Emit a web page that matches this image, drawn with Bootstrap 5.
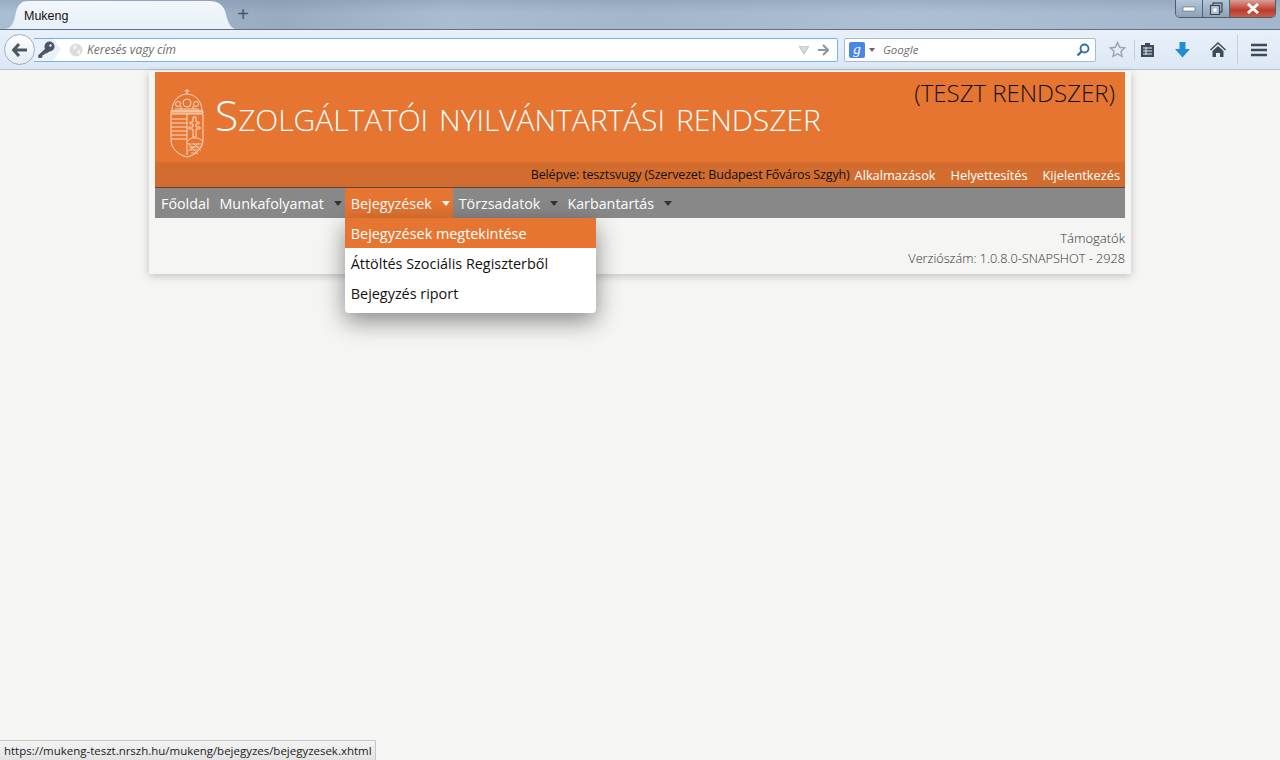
<!DOCTYPE html>
<html lang="hu">
<head>
  <meta charset="UTF-8">
  <title>Mukeng</title>
  <link href="https://cdn.jsdelivr.net/npm/bootstrap@5.3.3/dist/css/bootstrap.min.css" rel="stylesheet">
  <style>
    html, body { height: 760px; overflow: hidden; }
    body { background: #f5f5f3; font-family: "Open Sans", "Liberation Sans", sans-serif; font-size: 14px; color: #333; }

    /* browser chrome */
    .ff-tabbar { height: 30px; background: linear-gradient(rgba(70, 90, 115, .16), rgba(70, 90, 115, 0) 45%), linear-gradient(90deg, #a9bdd3 0%, #98abc1 22%, #a9bcd2 35%, #a3b6cc 50%, #acbfd4 70%, #a3b6cc 100%); border-bottom: 1px solid #5f7184; }
    .ff-tab { width: 232px; height: 29px; margin-left: 4px; flex: none; background: linear-gradient(#f3f7fb, #e6eff9); clip-path: path("M0 29C8 29 10 22 12 12C14 4 18 1 24 1L206 1C214 1 220 5 222 14C224 24 228 29 232 29Z"); padding: 7px 0 0 20px; font-family: "Liberation Sans", sans-serif; font-size: 12.5px; color: #111; }
    .ff-newtab { width: 30px; margin-left: -8px; text-align: center; font-size: 20px; line-height: 29px; color: #4a5561; font-family: "Liberation Sans", sans-serif; }
    .ff-winbtns { height: 18px; margin: 0 4px 0 auto; border: 1px solid #4d5c6b; border-top: 0; border-radius: 0 0 5px 5px; overflow: hidden; }
    .ff-winbtn { width: 27px; display: flex; align-items: center; justify-content: center; background: linear-gradient(#b4c5d8, #8ea3b9); border-right: 1px solid #53626f; }
    .ff-winclose { width: 45px; background: linear-gradient(#d9a097, #c0392b 60%, #c4604f); border-right: 0; }
    .ff-toolbar { height: 40px; background: linear-gradient(#e8f0f9, #dde8f6); border-bottom: 1px solid #b6c4d3; padding-left: 4px; }
    .ff-back { width: 31px; height: 31px; border-radius: 50%; border: 1px solid #9fb0c1; background: linear-gradient(#fff, #e3ebf4); z-index: 2; flex: none; }
    .ff-urlbar { width: 804px; height: 24px; margin-left: -1px; background: #fff; border: 1px solid #6fb4ea; border-left: 0; border-radius: 0 2px 2px 0; font-style: italic; font-size: 12px; color: #6d6d6d; padding-right: 4px; }
    .ff-ident { width: 27px; height: 22px; background: #e8f0f9; clip-path: polygon(0 0, 19px 0, 27px 50%, 19px 100%, 0 100%); flex: none; padding-left: 3px; margin-right: 8px; }
    .ff-globe { width: 14px; height: 14px; margin-right: 4px; flex: none; }
    .ff-search { width: 252px; height: 24px; margin-left: 6px; background: #fff; border: 1px solid #a9bacb; border-radius: 2px; font-style: italic; font-size: 11.5px; color: #6d6d6d; padding: 0 5px 0 4px; }
    .ff-glogo { width: 16px; height: 16px; background: #4a86e8; color: #fff; font-family: "Liberation Serif", serif; font-style: italic; font-weight: 400; font-size: 15px; line-height: 14px; text-align: center; border-radius: 2px; }
    .ff-star { margin-left: 13px; }
    .ff-sep { width: 1px; height: 20px; background: #c3cfdb; }
    .ff-sep-tall { height: 30px; margin-left: 11px; margin-right: 13px; }
    .ff-clip { margin-left: 5px; }
    .ff-down { margin-left: 20px; }
    .ff-home { margin-left: 20px; }

    /* page */
    .app-shell { width: 982px; height: 203px; margin: 1px auto 0 149px; padding: 1px 6px 0; background: #f5f5f3; box-shadow: 0 2px 8px rgba(0, 0, 0, .22); }
    .app-head { height: 90px; background: #e67532; padding: 0 10px 0 14px; }
    .app-title { font-weight: 300; font-variant: small-caps; font-size: 42.55px; letter-spacing: -.06px; line-height: 1; color: #fff; margin: 0 0 0 10px; padding-top: 22px; white-space: nowrap; }
    .app-test { font-weight: 300; font-size: 24px; line-height: 1; color: #111; margin-top: 9px; white-space: nowrap; }
    .app-userbar { height: 26px; background: #d26d2f; border-bottom: 1px solid #5c4538; font-size: 12.8px; padding: 0 5px 0 0; line-height: 26px; }
    .app-userbar span { color: #111; font-size: 12.5px; letter-spacing: -.15px; margin-right: 5px; }
    .app-userbar a { color: #fff; text-decoration: none; margin-left: 15px; }
    .app-userbar span + a { margin-left: 0; }
    .app-menu { height: 30px; background: #888; font-size: 14.3px; }
    .app-menu a { display: block; color: #fff; text-decoration: none; line-height: 30px; padding: 1px 6px 0; height: 30px; white-space: nowrap; }
    .app-menu > li:first-child > a { padding-right: 4px; }
    .app-menu a.has-sub { display: flex; padding-right: 3px; }
    .app-menu a.has-sub::after { content: ""; width: 0; height: 0; margin: 12px 0 0 10px; border: 4px solid transparent; border-top: 5px solid #333; border-bottom: 0; }
    .app-menu li.is-open > a { background: #e67532; }
    .app-menu li.is-open > a::after { border-top-color: #fff; }
    .app-drop { position: absolute; left: 0; top: 30px; width: 251px; background: #fff; border-radius: 0 0 4px 4px; padding-bottom: 5px; box-shadow: 0 8px 24px rgba(0, 0, 0, .45); overflow: hidden; z-index: 5; font-size: 14.4px; }
    .app-menu .app-drop a { color: #111; }
    .app-menu .app-drop a.is-active { background: #e67532; color: #fff; }
    .app-foot { font-size: 13px; text-align: right; color: #333; padding-top: 10px; line-height: 20px; font-weight: 300; }
    .app-version { font-size: 12.7px; }

    .ff-status { position: absolute; left: 0; bottom: 0; height: 20px; width: 376px; background: linear-gradient(#f4f4f4, #e3e3e3); border: 1px solid #c8c8c8; border-width: 1px 1px 0 0; font-family: "Open Sans", sans-serif; font-size: 11.48px; line-height: 20px; padding-left: 4px; color: #222; white-space: nowrap; }
  </style>
</head>
<body>
<!-- Böngésző keret -->
<div class="ff-tabbar d-flex">
  <div class="ff-tab">Mukeng</div>
  <div class="ff-newtab">+</div>
  <div class="ff-winbtns d-flex">
    <div class="ff-winbtn"><svg width="14" height="6"><rect x="1" y="1" width="12" height="4" fill="#fff" stroke="#55646f" stroke-width=".6"/></svg></div>
    <div class="ff-winbtn"><svg width="14" height="13"><rect x="4" y="1" width="9" height="9" fill="none" stroke="#39454f" stroke-width="1.2"/><rect x="1.5" y="3.5" width="9" height="9" fill="#b4c5d8" stroke="#39454f" stroke-width="1.2"/><rect x="4.5" y="6.5" width="3" height="3" fill="#fff"/></svg></div>
    <div class="ff-winbtn ff-winclose"><svg width="14" height="11"><path d="M2 1l10 9M12 1L2 10" stroke="#fff" stroke-width="3"/></svg></div>
  </div>
</div>
<div class="ff-toolbar d-flex align-items-center">
  <div class="ff-back d-flex align-items-center justify-content-center">
    <svg width="16" height="14" viewBox="0 0 16 14"><path d="M7 1L1.5 7 7 13M2 7h13" fill="none" stroke="#4c5761" stroke-width="3"/></svg>
  </div>
  <div class="ff-urlbar d-flex align-items-center">
    <div class="ff-ident d-flex align-items-center">
      <svg width="18" height="18" viewBox="0 0 18 18"><circle cx="12.500" cy="5.500" r="5" fill="#4c5761"/><path d="M9 7L1 14.500 1.500 17h3l1-1.500V14h1.500l1-1.500h1.500L13 10z" fill="#4c5761"/><circle cx="13.500" cy="4.500" r="1.200" fill="#e8f0f9"/></svg>
    </div>
    <svg class="ff-globe" viewBox="0 0 14 14"><circle cx="7" cy="7" r="6.500" fill="#dcdcdc"/><path d="M4 3l3-1 1 2-3 3zM8 8l3-1 0 3-2 2z" fill="#f4f4f4"/></svg>
    <span>Keresés vagy cím</span>
    <svg class="ms-auto me-2" width="10" height="8"><path d="M0 0h10L5 8z" fill="#d6dbe0" stroke="#b8bfc6"/></svg>
    <svg class="me-1" width="12" height="12" viewBox="0 0 12 12"><path d="M6 1l5 5-5 5M1 6h9" fill="none" stroke="#8a96a2" stroke-width="2"/></svg>
  </div>
  <div class="ff-search d-flex align-items-center">
    <div class="ff-glogo">g</div>
    <svg class="ms-1 me-2" width="6" height="4"><path d="M0 0h6L3 4z" fill="#666"/></svg>
    <span>Google</span>
    <svg class="ms-auto" width="14" height="14" viewBox="0 0 14 14"><circle cx="8.500" cy="5.500" r="4" fill="none" stroke="#2f6fae" stroke-width="1.800"/><path d="M5.500 8.500L1.500 12.500" stroke="#2f6fae" stroke-width="2.400"/></svg>
  </div>
  <svg class="ff-star" width="17" height="17" viewBox="0 0 17 17"><path d="M8.500 1.500l2.200 4.800 5 .6-3.700 3.400 1 5.100-4.500-2.600-4.500 2.600 1-5.100L1.300 6.900l5-.6z" fill="#e6ecf3" stroke="#9aa7b4" stroke-width="1.500"/></svg>
  <div class="ff-sep ms-2"></div>
  <svg class="ff-clip" width="15" height="15" viewBox="0 0 15 15"><path d="M1 3h4V1h5v2h4v12H1z" fill="#3d4a57"/><path d="M3 6h9M3 9h9M3 12h9M6 5v8" stroke="#dfe8f2"/></svg>
  <svg class="ff-down" width="15" height="16" viewBox="0 0 15 16"><path d="M4.500 0h6v7H15l-7.500 8.500L0 7h4.500z" fill="#1f8fd0"/></svg>
  <svg class="ff-home" width="16" height="15" viewBox="0 0 16 15"><path d="M8 0L0 7.500l1 1L8 2l7 6.500 1-1zM2.500 9L8 4l5.500 5v6H10v-4H6v4H2.500z" fill="#3d4a57"/></svg>
  <div class="ff-sep ff-sep-tall"></div>
  <svg width="16" height="14" viewBox="0 0 16 14"><path d="M0 2h16M0 7h16M0 12h16" stroke="#3d4a57" stroke-width="2.500"/></svg>
</div>

<!-- Alkalmazás -->
<div class="app-shell">
  <div class="app-head d-flex justify-content-between">
    <div class="d-flex">
      <svg class="mt-3 flex-shrink-0" width="36" height="70" viewBox="0 0 36 70" fill="none" stroke="#fbe3d3" stroke-width=".9">
        <path d="M18 1v5M15.500 3h5"/>
        <path d="M3 23C3 12 11 6 18 6s15 6 15 17z"/>
        <circle cx="18" cy="15" r="4"/>
        <circle cx="9" cy="16" r="2.500"/><circle cx="27" cy="16" r="2.500"/>
        <path d="M6 21h24M12 18v3M24 18v3"/>
        <path d="M2 23h32v2H2z"/>
        <path d="M2 26h32v26c0 9-8 15-16 17C10 67 2 61 2 52z"/>
        <path d="M18 26v41"/>
        <path d="M2 31h16M2 35h16M2 39h16M2 43h16M2 47h16M2 51h16"/>
        <path d="M24 29h3v5h3v2h-3v3h4v2h-4v8h-3v-8h-4v-2h4v-3h-3v-2h3z"/>
        <path d="M19 53c2-3 4-3 6.500-3s5 0 7.500 3"/>
        <path d="M19 56h14M20 59h12M21 62h9M22 65h6M19 55l10 11M24 55l8 8M30 55l-11 8" stroke-width=".7"/>
      </svg>
      <h1 class="app-title">Szolgáltatói nyilvántartási rendszer</h1>
    </div>
    <div class="app-test">(TESZT RENDSZER)</div>
  </div>
  <div class="app-userbar d-flex justify-content-end">
    <span>Belépve: tesztsvugy (Szervezet: Budapest Főváros Szgyh)</span>
    <a href="#">Alkalmazások</a>
    <a href="#">Helyettesítés</a>
    <a href="#">Kijelentkezés</a>
  </div>
  <ul class="app-menu list-unstyled d-flex m-0">
    <li><a href="#">Főoldal</a></li>
    <li><a class="has-sub" href="#">Munkafolyamat</a></li>
    <li class="is-open position-relative"><a class="has-sub" href="#">Bejegyzések</a>
      <div class="app-drop">
        <a class="is-active" href="#">Bejegyzések megtekintése</a>
        <a href="#">Áttöltés Szociális Regiszterből</a>
        <a href="#">Bejegyzés riport</a>
      </div>
    </li>
    <li><a class="has-sub" href="#">Törzsadatok</a></li>
    <li><a class="has-sub" href="#">Karbantartás</a></li>
  </ul>
  <div class="app-foot">
    <div>Támogatók</div>
    <div class="app-version">Verziószám: 1.0.8.0-SNAPSHOT - 2928</div>
  </div>
</div>

<div class="ff-status">https://mukeng-teszt.nrszh.hu/mukeng/bejegyzes/bejegyzesek.xhtml</div>

<script src="https://cdn.jsdelivr.net/npm/bootstrap@5.3.3/dist/js/bootstrap.bundle.min.js"></script>
</body>
</html>
